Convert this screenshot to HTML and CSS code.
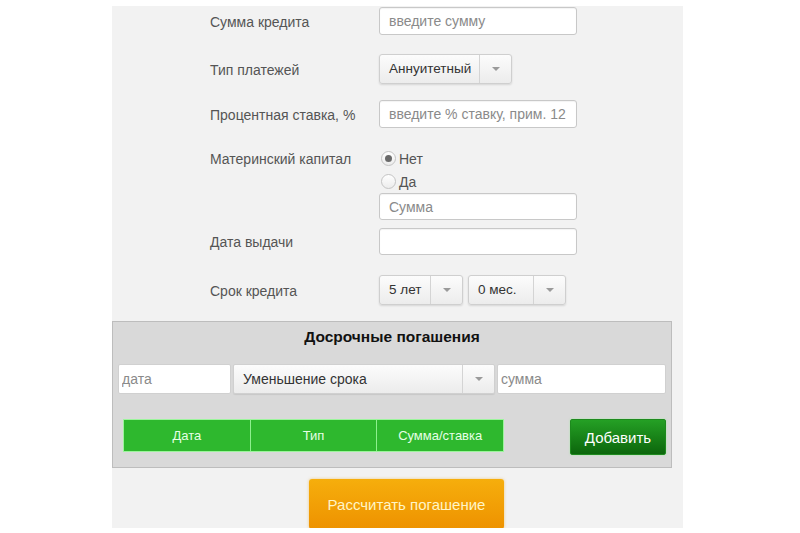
FILE: index.html
```html
<!DOCTYPE html>
<html lang="ru">
<head>
<meta charset="utf-8">
<title>Кредитный калькулятор</title>
<link rel="stylesheet" href="styles.css">
</head>
<body>
<div class="panel">
  <div class="form">
    <div class="row r1">
      <div class="lbl h28">Сумма кредита</div>
      <div class="ctrl"><input class="inp w198 h28" placeholder="введите сумму"></div>
    </div>
    <div class="row r2">
      <div class="lbl h30">Тип платежей</div>
      <div class="ctrl">
        <div class="sel h30"><span class="sel-text w99">Аннуитетный</span><span class="sel-arrow"></span></div>
      </div>
    </div>
    <div class="row r3">
      <div class="lbl h28">Процентная ставка, %</div>
      <div class="ctrl"><input class="inp w198 h28" placeholder="введите % ставку, прим. 12"></div>
    </div>
    <div class="row r4">
      <div class="lbl h23">Материнский капитал</div>
      <div class="ctrl col">
        <label class="radio"><span class="dot checked"></span>Нет</label>
        <label class="radio"><span class="dot"></span>Да</label>
        <input class="inp w198 h27" placeholder="Сумма">
      </div>
    </div>
    <div class="row r5">
      <div class="lbl h27">Дата выдачи</div>
      <div class="ctrl"><input class="inp w198 h27"></div>
    </div>
    <div class="row r6">
      <div class="lbl h30">Срок кредита</div>
      <div class="ctrl pair">
        <div class="sel h30"><span class="sel-text w50">5 лет</span><span class="sel-arrow"></span></div>
        <div class="sel h30"><span class="sel-text w64">0 мес.</span><span class="sel-arrow"></span></div>
      </div>
    </div>
  </div>

  <div class="early">
    <div class="early-title">Досрочные погашения</div>
    <div class="early-inputs">
      <input class="inp flat e-date" placeholder="дата">
      <div class="sel flat e-sel"><span class="sel-text grow">Уменьшение срока</span><span class="sel-arrow"></span></div>
      <input class="inp flat e-sum" placeholder="сумма">
    </div>
    <div class="early-bottom">
      <div class="gtable">
        <div class="gcell">Дата</div>
        <div class="gcell">Тип</div>
        <div class="gcell">Сумма/ставка</div>
      </div>
      <button class="add">Добавить</button>
    </div>
  </div>

  <div class="calc-wrap">
    <button class="calc">Рассчитать погашение</button>
  </div>
</div>
</body>
</html>
```

FILE: styles.css
```css
* { box-sizing: border-box; }
html, body { margin: 0; padding: 0; background: #fff; }
body {
  font-family: "Liberation Sans", Arial, sans-serif;
  font-size: 14px;
  color: #444;
}
.panel {
  width: 571px;
  height: 522px;
  margin: 6px 0 0 112px;
  background: #f2f2f2;
}
.form { padding: 1px 0 0 98px; }
.row { display: flex; align-items: flex-start; }
.r2 { margin-top: 19px; }
.r3 { margin-top: 16px; }
.r4 { margin-top: 19px; }
.r5 { margin-top: 8px; }
.r6 { margin-top: 20px; }
.lbl { width: 169px; color: #555; padding-top: 1px; }
.h23 { line-height: 23px; height: 23px; }
.h27 { height: 27px; line-height: 27px; }
.h28 { height: 28px; line-height: 28px; }
.h30 { height: 30px; line-height: 30px; }
.w198 { width: 198px; }
.ctrl { display: flex; }
.ctrl.col { flex-direction: column; }
.ctrl.pair { gap: 5px; }
.inp {
  font: inherit;
  font-size: 14px;
  color: #444;
  background: #fff;
  border: 1px solid #c8c8c8;
  border-radius: 3px;
  padding: 0 9px;
  box-shadow: inset 0 1px 1px rgba(0,0,0,0.05);
  outline: none;
}
.inp::placeholder { color: #8a8a8a; }
.sel {
  display: flex;
  border: 1px solid #cfcfcf;
  border-radius: 3px;
  background: linear-gradient(#fcfcfc, #ececec);
  box-shadow: 0 1px 2px rgba(0,0,0,0.12);
  color: #333;
  font-size: 13.5px;
}
.sel-text { padding-left: 9px; line-height: 28px; }
.w99 { width: 99px; }
.w50 { width: 50px; }
.w64 { width: 64px; }
.sel-text.grow { flex: 1; }
.sel-arrow {
  width: 32px;
  border-left: 1px solid #d4d4d4;
  position: relative;
}
.sel-arrow::after {
  content: "";
  position: absolute;
  left: 50%;
  top: 50%;
  margin: -2px 0 0 -4px;
  border-left: 4px solid transparent;
  border-right: 4px solid transparent;
  border-top: 4px solid #9a9a9a;
}
.radio {
  display: flex;
  align-items: center;
  height: 23px;
  color: #555;
  font-size: 14px;
}
.dot {
  width: 15px;
  height: 15px;
  border-radius: 50%;
  border: 1px solid #c4c4c4;
  background: linear-gradient(#fff, #ececec);
  margin: 0 3px 0 2px;
  position: relative;
}
.dot.checked::after {
  content: "";
  position: absolute;
  left: 3px; top: 3px;
  width: 7px; height: 7px;
  border-radius: 50%;
  background: #6a6a6a;
}

.early {
  width: 560px;
  height: 147px;
  margin-top: 16px;
  background: #d9d9d9;
  border: 1px solid #bdbdbd;
  padding: 5px 5px 0 5px;
}
.early-title {
  text-align: center;
  font-weight: bold;
  font-size: 15.5px;
  color: #111;
  line-height: 20px;
}
.early-inputs {
  display: flex;
  gap: 2px;
  margin-top: 17px;
  height: 30px;
}
.flat { height: 30px; border-radius: 2px; border: 1px solid #d0d0d0; }
.inp.flat { padding: 0 3px; box-shadow: none; }
.e-date { width: 113px; }
.e-sel { width: 262px; box-shadow: 0 1px 1px rgba(0,0,0,0.08); font-size: 14px; }
.e-sum { width: 169px; }
.early-bottom {
  display: flex;
  justify-content: space-between;
  align-items: flex-start;
  margin-top: 25px;
  padding-left: 5px;
}
.gtable {
  display: flex;
  width: 381px;
  height: 33px;
  border: 1px solid #9cf59c;
  background: #2eb82e;
}
.gcell {
  flex: 1;
  text-align: center;
  line-height: 31px;
  color: #e6ffe6;
  font-size: 13px;
  border-left: 1px solid #8ef08e;
}
.gcell:first-child { border-left: none; }
.add {
  width: 96px;
  height: 36px;
  border: 1px solid #1e8a1e;
  border-radius: 2px;
  background: linear-gradient(#25a025, #0c660c);
  color: #fff;
  font: inherit;
  font-size: 15px;
  padding: 0;
  box-shadow: 0 0 2px rgba(120,255,120,0.5);
}
.calc-wrap {
  display: flex;
  padding-left: 197px;
  margin-top: 11px;
}
.calc {
  width: 195px;
  height: 50px;
  border: none;
  border-radius: 3px;
  background: linear-gradient(#f6ae0c, #ee9200);
  color: #fff5c6;
  font: inherit;
  font-size: 15px;
  padding: 0;
  box-shadow: 0 0 3px rgba(240,160,0,0.5);
}
```
